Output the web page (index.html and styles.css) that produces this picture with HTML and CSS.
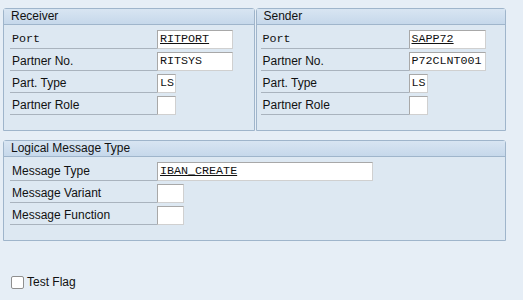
FILE: index.html
```html
<!DOCTYPE html>
<html lang="en">

<head>
  <meta charset="UTF-8" />
  <meta name="viewport" content="width=device-width, initial-scale=1.0" />
  <title>Partner Profile</title>
  <link rel="stylesheet" href="styles.css">
</head>

<body>
  <div class="page">
    <div class="groups">
      <div class="group receiver">
        <div class="group-title">Receiver</div>
        <div class="group-body">
          <div class="row">
            <div class="label mono">Port</div>
            <div class="field w76"><span class="key">RITPORT</span></div>
          </div>
          <div class="row">
            <div class="label">Partner No.</div>
            <div class="field w76">RITSYS</div>
          </div>
          <div class="row">
            <div class="label">Part. Type</div>
            <div class="field w19">LS</div>
          </div>
          <div class="row">
            <div class="label">Partner Role</div>
            <div class="field w19"></div>
          </div>
        </div>
      </div>
      <div class="group sender">
        <div class="group-title">Sender</div>
        <div class="group-body">
          <div class="row">
            <div class="label mono">Port</div>
            <div class="field w77"><span class="key">SAPP72</span></div>
          </div>
          <div class="row">
            <div class="label">Partner No.</div>
            <div class="field w77">P72CLNT001</div>
          </div>
          <div class="row">
            <div class="label">Part. Type</div>
            <div class="field w19">LS</div>
          </div>
          <div class="row">
            <div class="label">Partner Role</div>
            <div class="field w19"></div>
          </div>
        </div>
      </div>
    </div>

    <div class="group message">
      <div class="group-title">Logical Message Type</div>
      <div class="group-body">
        <div class="row">
          <div class="label">Message Type</div>
          <div class="field w216"><span class="key">IBAN_CREATE</span></div>
        </div>
        <div class="row">
          <div class="label">Message Variant</div>
          <div class="field w27"></div>
        </div>
        <div class="row">
          <div class="label">Message Function</div>
          <div class="field w27"></div>
        </div>
      </div>
    </div>

    <label class="check">
      <span class="box"></span>
      <span>Test Flag</span>
    </label>
  </div>
</body>

</html>
```

FILE: styles.css
```css
body {
  margin: 0;
  background: #e6eef6;
  font-family: "Liberation Sans", Arial, sans-serif;
  font-size: 12px;
  color: #111;
}

.page {
  padding: 8px 17px 0 3px;
}

.groups {
  display: flex;
  gap: 1px;
}

.group {
  border: 1px solid #9fb5cb;
  border-radius: 3px 3px 0 0;
  background: #dde8f2;
}

.receiver {
  width: 250px;
}

.sender {
  width: 249px;
}

.group-title {
  height: 15px;
  line-height: 15px;
  padding-left: 7px;
  background: linear-gradient(#d8e5f2, #c6d8eb);
  border-bottom: 1px solid #9fb5cb;
  font-size: 12px;
}

.group-body {
  padding: 5px 0 15px 6px;
}

.sender .group-body {
  padding-left: 4px;
}

.row {
  display: flex;
  height: 19px;
  margin-bottom: 3px;
}

.row:last-child {
  margin-bottom: 0;
}

.label {
  width: 145px;
  padding-left: 2px;
  line-height: 18px;
  border-bottom: 1px solid #a9b3be;
}

.sender .label {
  width: 146px;
}

.label.mono {
  font-family: "Liberation Mono", "Courier New", monospace;
  font-size: 11.7px;
}

.field {
  box-sizing: border-box;
  height: 19px;
  border: 1px solid #a8a8a8;
  border-right-color: #d0d0d0;
  border-bottom-color: #d0d0d0;
  background: #fff;
  padding-left: 2px;
  line-height: 16px;
  font-family: "Liberation Mono", "Courier New", monospace;
  font-size: 11.7px;
  color: #111;
  white-space: nowrap;
  overflow: hidden;
}

.key {
  text-decoration: underline;
}

.w19 {
  width: 19px;
}

.w27 {
  width: 27px;
}

.w76 {
  width: 76px;
}

.w77 {
  width: 77px;
}

.w216 {
  width: 216px;
}

.message {
  margin-top: 9px;
}

.check {
  display: flex;
  align-items: center;
  gap: 3px;
  margin-top: 34px;
  padding-left: 8px;
  font-size: 12px;
}

.check .box {
  box-sizing: border-box;
  width: 13px;
  height: 13px;
  border: 1px solid #8f8f8f;
  border-radius: 2px;
  background: #fff;
}
```
